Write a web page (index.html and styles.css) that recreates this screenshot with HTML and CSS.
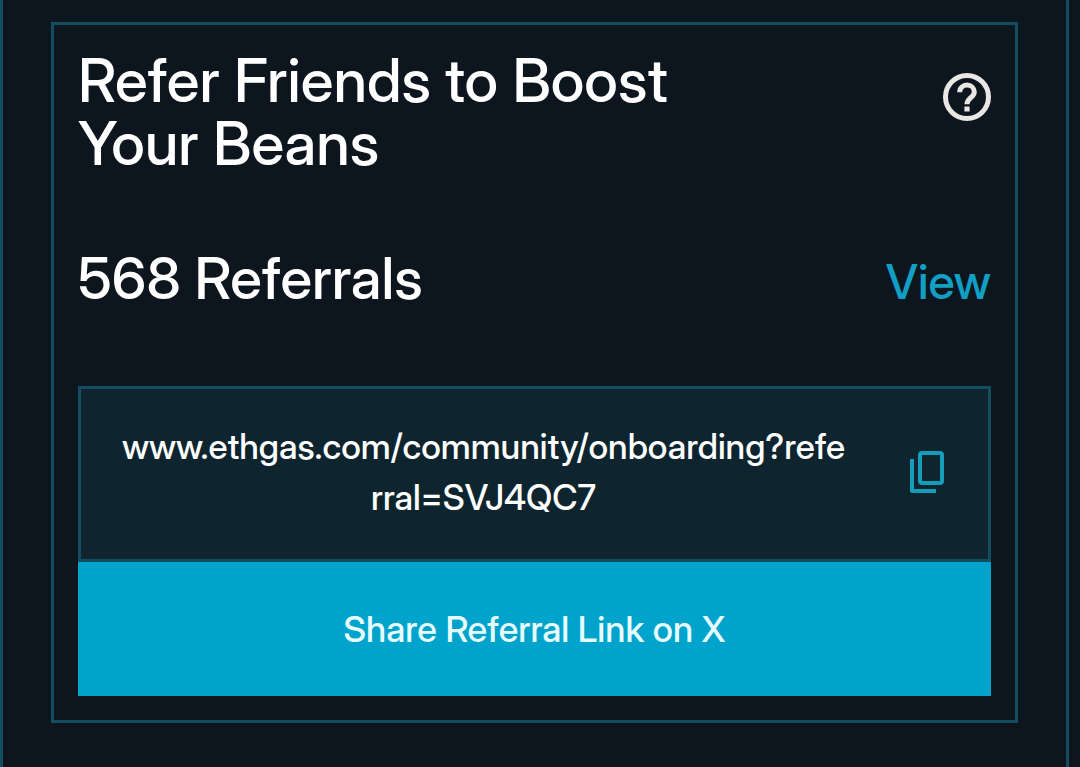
FILE: index.html
```html
<!DOCTYPE html>
<html lang="en">
<head>
<meta charset="utf-8">
<meta name="viewport" content="width=device-width, initial-scale=1">
<title>Refer Friends</title>
<link rel="stylesheet" href="styles.css">
</head>
<body>
<main class="panel">
  <section class="card">
    <header class="card-header">
      <h2 class="title">Refer Friends to Boost Your Beans</h2>
      <button class="icon-button help" type="button" aria-label="Help">
        <svg width="48" height="48" viewBox="0 0 48 48" fill="none" stroke="currentColor" stroke-width="5" aria-hidden="true">
          <circle cx="24" cy="24" r="21.500"/>
          <path d="M16.700 19.200C16.700 14.800 20 12.100 24 12.100c4 0 7.300 2.800 7.300 6.900 0 5.500-7.300 6-7.300 12.200"/>
          <path d="M21.400 36h5.200"/>
        </svg>
      </button>
    </header>
    <div class="stats">
      <p class="count">568 Referrals</p>
      <a class="view" href="#referrals">View</a>
    </div>
    <div class="link-box">
      <p class="link-text">www.ethgas.com/community/onboarding?referral=SVJ4QC7</p>
      <button class="icon-button copy" type="button" aria-label="Copy link">
        <svg width="34" height="42" viewBox="0 0 34 42" fill="none" stroke="currentColor" stroke-width="4" stroke-linejoin="round" aria-hidden="true">
          <rect x="10" y="2" width="22" height="30" rx="2"/>
          <path d="M2 8v32h24"/>
        </svg>
      </button>
    </div>
    <button class="share" type="button">Share Referral Link on X</button>
  </section>
</main>
</body>
</html>
```

FILE: styles.css
```css
* {
  box-sizing: border-box;
}

body {
  margin: 0;
  background: #0d151f;
  color: #fff;
  font-family: "Inter Display", Inter, "Liberation Sans", sans-serif;
  font-weight: 500;
  font-variation-settings: "opsz" 32;
}

.panel {
  min-height: 100vh;
  margin-right: 11px;
  padding: 22px 48px 44px;
  border: solid #134e5e;
  border-width: 0 3px;
}

.card {
  padding: 24px;
  border: 3px solid #134e5e;
}

.card-header {
  display: flex;
  justify-content: space-between;
  align-items: flex-start;
}

.title,
.count {
  margin: 0;
  font-weight: 500;
  line-height: 63px;
}

.title {
  max-width: 720px;
  font-size: 60px;
}

.count {
  font-size: 58px;
}

.icon-button {
  flex: none;
  padding: 0;
  border: 0;
  background: none;
  cursor: pointer;
}

.icon-button svg {
  display: block;
}

.help {
  margin-top: 24px;
  color: #e9e6e3;
}

.stats {
  display: flex;
  justify-content: space-between;
  align-items: baseline;
  margin: 72px 0 74px;
}

.view {
  color: #119fc3;
  font-size: 48px;
  line-height: 60px;
  text-decoration: none;
}

.link-box {
  display: flex;
  align-items: center;
  gap: 64px;
  padding: 32px 44px 36px 40px;
  border: 3px solid #134e5e;
  background: #0e2530;
}

.link-text {
  flex: 1;
  min-width: 0;
  margin: 0;
  font-size: 35px;
  line-height: 51px;
  text-align: center;
  word-break: break-all;
}

.copy {
  color: #159dbb;
}

.share {
  display: block;
  width: 100%;
  padding: 40px 24px;
  border: 0;
  background: #00a3cb;
  color: #e6fcff;
  font: inherit;
  font-variation-settings: inherit;
  font-size: 36px;
  line-height: 54px;
  cursor: pointer;
}
```
